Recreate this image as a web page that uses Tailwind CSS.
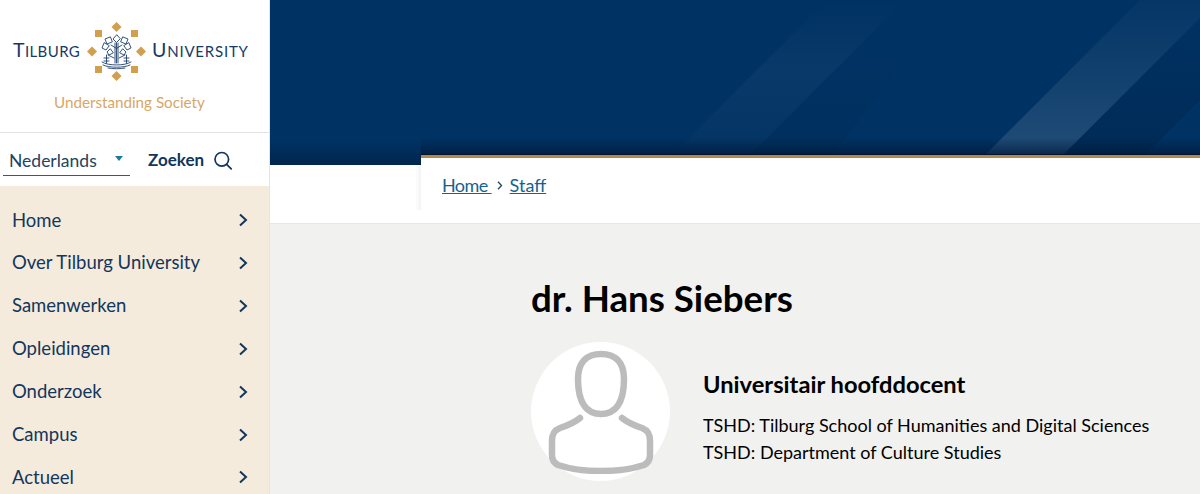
<!DOCTYPE html>
<html lang="nl">
<head>
<meta charset="utf-8">
<script src="https://cdn.jsdelivr.net/npm/@tailwindcss/browser@4"></script>
<title>dr. Hans Siebers</title>
</head>
<body class="m-0 overflow-hidden bg-white font-['Lato',sans-serif]">
<div class="flex h-[494px] w-[1200px] overflow-hidden">
  <aside class="flex h-[494px] w-[270px] shrink-0 flex-col border-r border-[#e4e4e4] bg-white">
    <div class="flex h-[133px] shrink-0 flex-col border-b border-[#e3e3e3] pt-[22px]">
      <div class="flex h-[59px] items-center pl-[13px] text-[#163a66]">
        <span class="w-[74px] pb-[3px] text-[19.500px] leading-none tracking-[0.400px]">T<span class="text-[15px]">ILBURG</span></span>
        <svg class="h-[59px] w-[59px] shrink-0" viewBox="0 0 59 59" aria-hidden="true">
          <g fill="#d29f4e">
            <path d="M29.500 0l5 5-5 5-5-5z"/>
            <path d="M29.500 49l5 5-5 5-5-5z"/>
            <path d="M0 29.500l5-5 5 5-5 5z"/>
            <path d="M49 29.500l5-5 5 5-5 5z"/>
            <rect x="8" y="8" width="7" height="7"/>
            <rect x="44" y="8" width="7" height="7"/>
            <rect x="8" y="44" width="7" height="7"/>
            <rect x="44" y="44" width="7" height="7"/>
          </g>
          <g fill="none" stroke="#1d3f6b" stroke-width="0.900" stroke-linecap="round">
            <path d="M29.500 13l-3.500 4 3.500 3.500 3.500-3.500z"/>
            <path d="M23 15l-5 2 2 5 5-2z"/>
            <path d="M36 15l5 2-2 5-5-2z"/>
            <path d="M17 21l-2 5 4 2 3-4z"/>
            <path d="M42 21l2 5-4 2-3-4z"/>
            <path d="M24 23l5.500 3.500 5.500-3.500"/>
            <path d="M23 27l-3 3 2 3 4-2z"/>
            <path d="M36 27l3 3-2 3-4-2z"/>
            <path d="M21 33l6 3"/>
            <path d="M38 33l-6 3"/>
            <path d="M28 21v20"/>
            <path d="M31 21v20"/>
            <path d="M29.500 21v20"/>
            <path d="M19.500 33v8"/>
            <path d="M39.500 33v8"/>
            <path d="M17 36h5"/>
            <path d="M37 36h5"/>
            <path d="M17 39h5"/>
            <path d="M37 39h5"/>
            <path d="M15 40c6 4 23 4 29 0"/>
            <path d="M16 43c6 3 21 3 27 0"/>
            <path d="M21 46c4 1 13 1 17 0"/>
          </g>
        </svg>
        <span class="ml-[6px] w-[98px] pb-[3px] text-[19.500px] leading-none tracking-[0.800px]">U<span class="text-[15px]">NIVERSITY</span></span>
      </div>
      <p class="mt-[11px] w-full pl-[54px] text-[15.200px] leading-[20px] text-[#d6a767]">Understanding Society</p>
    </div>
    <div class="flex h-[53px] shrink-0 items-start pl-[3px] pt-[14px]">
      <div class="relative flex h-[29px] w-[127px] items-center border-b border-[#1f6188] pl-[6px] text-[17.500px] text-[#23435f]">
        Nederlands
        <span class="absolute left-[112px] top-[9px] h-0 w-0 border-x-[4.500px] border-t-[5px] border-x-transparent border-t-[#1f7aa3]"></span>
      </div>
      <div class="ml-[18px] flex h-[26px] items-center text-[17px] font-bold text-[#12365c]">
        Zoeken
        <svg class="ml-[9px] h-[20px] w-[20px]" viewBox="0 0 20 20" fill="none" stroke="#12365c" stroke-width="1.700" aria-hidden="true">
          <circle cx="8.800" cy="9.300" r="6.800"/>
          <path d="M13.600 14.300l4.600 4.600" stroke-linecap="round"/>
        </svg>
      </div>
    </div>
    <nav class="flex-1 bg-[#f4ebdc] pt-[13px] text-[18.500px] text-[#12365c]">
      <a class="flex h-[42.830px] items-center justify-between pl-[12px] pr-[21px]">Home<svg class="h-[14px] w-[10px]" viewBox="0 0 10 14" fill="none" stroke="#12365c" stroke-width="2"><path d="M2 1.500l6 5.500-6 5.500"/></svg></a>
      <a class="flex h-[42.830px] items-center justify-between pl-[12px] pr-[21px]">Over Tilburg University<svg class="h-[14px] w-[10px]" viewBox="0 0 10 14" fill="none" stroke="#12365c" stroke-width="2"><path d="M2 1.500l6 5.500-6 5.500"/></svg></a>
      <a class="flex h-[42.830px] items-center justify-between pl-[12px] pr-[21px]">Samenwerken<svg class="h-[14px] w-[10px]" viewBox="0 0 10 14" fill="none" stroke="#12365c" stroke-width="2"><path d="M2 1.500l6 5.500-6 5.500"/></svg></a>
      <a class="flex h-[42.830px] items-center justify-between pl-[12px] pr-[21px]">Opleidingen<svg class="h-[14px] w-[10px]" viewBox="0 0 10 14" fill="none" stroke="#12365c" stroke-width="2"><path d="M2 1.500l6 5.500-6 5.500"/></svg></a>
      <a class="flex h-[42.830px] items-center justify-between pl-[12px] pr-[21px]">Onderzoek<svg class="h-[14px] w-[10px]" viewBox="0 0 10 14" fill="none" stroke="#12365c" stroke-width="2"><path d="M2 1.500l6 5.500-6 5.500"/></svg></a>
      <a class="flex h-[42.830px] items-center justify-between pl-[12px] pr-[21px]">Campus<svg class="h-[14px] w-[10px]" viewBox="0 0 10 14" fill="none" stroke="#12365c" stroke-width="2"><path d="M2 1.500l6 5.500-6 5.500"/></svg></a>
      <a class="flex h-[42.830px] items-center justify-between pl-[12px] pr-[21px]">Actueel<svg class="h-[14px] w-[10px]" viewBox="0 0 10 14" fill="none" stroke="#12365c" stroke-width="2"><path d="M2 1.500l6 5.500-6 5.500"/></svg></a>
    </nav>
  </aside>
  <main class="flex min-w-0 flex-1 flex-col bg-[#f1f1ef]">
    <div class="relative h-[165px] shrink-0 overflow-hidden bg-[#003263]">
      <svg class="absolute inset-0 h-full w-full" viewBox="0 0 930 165" aria-hidden="true">
        <defs>
          <linearGradient id="a" x1="0" y1="0" x2="0" y2="1"><stop offset="0" stop-color="#fff" stop-opacity="0.02"/><stop offset="0.3" stop-color="#fff" stop-opacity="0.05"/><stop offset="1" stop-color="#fff" stop-opacity="0.13"/></linearGradient>
          <linearGradient id="b" x1="0" y1="0" x2="0" y2="1"><stop offset="0" stop-color="#fff" stop-opacity="0"/><stop offset="0.45" stop-color="#fff" stop-opacity="0.035"/><stop offset="1" stop-color="#fff" stop-opacity="0.01"/></linearGradient>
          <linearGradient id="d" x1="0" y1="0" x2="0" y2="1"><stop offset="0" stop-color="#001a3a" stop-opacity="0"/><stop offset="1" stop-color="#001a3a" stop-opacity="0.3"/></linearGradient>
          <linearGradient id="e" x1="0" y1="0" x2="0" y2="1"><stop offset="0.3" stop-color="#001a3a" stop-opacity="0"/><stop offset="1" stop-color="#001a3a" stop-opacity="0.12"/></linearGradient>
          <linearGradient id="c" x1="0" y1="0" x2="0" y2="1"><stop offset="0" stop-color="#001a3a" stop-opacity="0"/><stop offset="1" stop-color="#001a3a" stop-opacity="0.75"/></linearGradient>
        </defs>
        <path d="M715 155L870 0h60v18L793 155z" fill="url(#a)"/>
        <path d="M793 155L930 18v82l-55 55z" fill="url(#d)"/>
        <path d="M402 155L557 0h78L480 155z" fill="url(#b)"/>
        <path d="M480 155L635 0h45L563 155z" fill="url(#e)"/>
        <rect x="151" y="138" width="779" height="17" fill="url(#c)"/>
        <rect x="0" y="141" width="151" height="24" fill="url(#c)" fill-opacity="0.7"/>
      </svg>
    </div>
    <div class="relative h-[59px] shrink-0 border-b border-[#e6e6e4] bg-white">
      <div class="absolute -top-[10px] bottom-[1px] left-[151px] right-0 border-t-[3px] border-[#b5884f] bg-white pl-[21px] pt-[15px]">
        <div class="absolute inset-x-0 -top-[4px] h-[1px] bg-[#00152e]"></div>
        <div class="absolute -left-[6px] bottom-[12px] top-0 w-[6px] bg-gradient-to-l from-black/5 to-transparent"></div>
        <div class="flex items-center text-[18px] leading-[24px] text-[#146390]">
          <a class="underline tracking-[-0.600px]">Home&nbsp;</a>
          <svg class="ml-[5px] mr-[5px] h-[9px] w-[6px]" viewBox="0 0 6 9" fill="none" stroke="#23435f" stroke-width="1.300"><path d="M1 .8l3.500 3.700L1 8.200"/></svg>
          <a class="ml-[2px] underline">Staff</a>
        </div>
      </div>
    </div>
    <section class="pl-[261px] pt-[48px]">
      <h1 class="text-[36.700px] font-bold leading-[52px] text-black">dr. Hans Siebers</h1>
      <div class="mt-[18px] flex">
        <div class="flex h-[139px] w-[139px] shrink-0 items-center justify-center rounded-full bg-white">
          <svg class="h-[124px] w-[106px]" viewBox="0 0 106 124" fill="none" stroke="#bcbcbc" stroke-width="6.500" stroke-linecap="round" stroke-linejoin="round" aria-hidden="true">
            <path d="M53 4c-14 0-23 8-23 25 0 26 10 35 23 35s23-9 23-35C76 12 67 4 53 4z"/>
            <path d="M32 68c-6 5-14 8-20 10-5 2-8 5-8 13v14c0 5 2 8 6 10 12 4 29 6 43 6s31-2 43-6c4-2 6-5 6-10V91c0-8-3-11-8-13-6-2-14-5-20-10"/>
          </svg>
        </div>
        <div class="ml-[33px] pt-[27px] text-black">
          <h2 class="text-[23.700px] font-bold leading-[30px]">Universitair hoofddocent</h2>
          <p class="mt-[13px] text-[18px] leading-[27px]">TSHD: Tilburg School of Humanities and Digital Sciences</p>
          <p class="text-[18px] leading-[27px]">TSHD: Department of Culture Studies</p>
        </div>
      </div>
    </section>
  </main>
</div>
</body>
</html>
